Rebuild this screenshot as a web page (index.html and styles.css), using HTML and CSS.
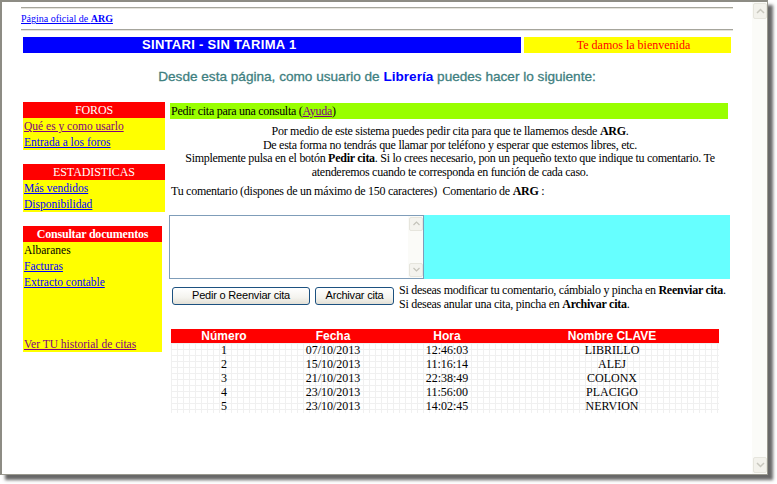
FILE: index.html
```html
<!DOCTYPE html>
<html lang="es">
<head>
<meta charset="utf-8">
<title>SINTARI - SIN TARIMA 1</title>
<link rel="stylesheet" href="styles.css">
</head>
<body>
<div class="window">
  <div class="page">
    <hr class="rule rule-first">
    <div class="toplink"><a href="#">Página oficial de <b>ARG</b></a></div>
    <hr class="rule">
    <div class="banner">
      <div class="banner-title">SINTARI - SIN TARIMA 1</div>
      <div class="banner-welcome">Te damos la bienvenida</div>
    </div>
    <h1 class="lead">Desde esta página, como usuario de <span class="lead-user">Librería</span> puedes hacer lo siguiente:</h1>
    <div class="columns">
      <aside class="sidebar">
        <div class="box">
          <div class="box-head">FOROS</div>
          <div class="box-item"><a href="#" class="visited">Qué es y como usarlo</a></div>
          <div class="box-item"><a href="#">Entrada a los foros</a></div>
        </div>
        <div class="box">
          <div class="box-head">ESTADISTICAS</div>
          <div class="box-item"><a href="#">Más vendidos</a></div>
          <div class="box-item"><a href="#">Disponibilidad</a></div>
        </div>
        <div class="box box-docs">
          <div class="box-head box-head-bold">Consultar documentos</div>
          <div class="box-item">Albaranes</div>
          <div class="box-item"><a href="#">Facturas</a></div>
          <div class="box-item"><a href="#">Extracto contable</a></div>
          <div class="box-spacer"></div>
          <div class="box-item"><a href="#" class="visited">Ver TU historial de citas</a></div>
        </div>
      </aside>
      <main class="main">
        <div class="greenbar">Pedir cita para una consulta (<a href="#" class="visited">Ayuda</a>)</div>
        <p class="intro">Por medio de este sistema puedes pedir cita para que te llamemos desde <b>ARG</b>.<br>De esta forma no tendrás que llamar por teléfono y esperar que estemos libres, etc.<br>Simplemente pulsa en el botón <b>Pedir cita</b>. Si lo crees necesario, pon un pequeño texto que indique tu comentario. Te<br>atenderemos cuando te corresponda en función de cada caso.</p>
        <p class="comment-label">Tu comentario (dispones de un máximo de 150 caracteres)&nbsp; Comentario de <b>ARG</b> :</p>
        <div class="comment-row">
          <div class="textbox">
            <textarea class="textbox-input"></textarea>
            <div class="textbox-scroll">
              <div class="tsb-btn"><svg width="7" height="5" viewBox="0 0 7 5"><path d="M0.5 4 L3.5 1 L6.5 4" fill="none" stroke="#c4c3ba" stroke-width="1.2"/></svg></div>
              <div class="tsb-track"></div>
              <div class="tsb-btn"><svg width="7" height="5" viewBox="0 0 7 5"><path d="M0.5 1 L3.5 4 L6.5 1" fill="none" stroke="#c4c3ba" stroke-width="1.2"/></svg></div>
            </div>
          </div>
          <div class="arg-comment"></div>
        </div>
        <div class="actions">
          <button class="xp-btn btn-send">Pedir o Reenviar cita</button>
          <button class="xp-btn btn-archive">Archivar cita</button>
          <p class="actions-help">Si deseas modificar tu comentario, cámbialo y pincha en <b>Reenviar cita</b>.<br>Si deseas anular una cita, pincha en <b>Archivar cita</b>.</p>
        </div>
        <table class="citas">
          <thead>
            <tr><th class="c1">Número</th><th class="c2">Fecha</th><th class="c3">Hora</th><th class="c4">Nombre CLAVE</th></tr>
          </thead>
          <tbody>
            <tr><td>1</td><td>07/10/2013</td><td>12:46:03</td><td>LIBRILLO</td></tr>
            <tr><td>2</td><td>15/10/2013</td><td>11:16:14</td><td>ALEJ</td></tr>
            <tr><td>3</td><td>21/10/2013</td><td>22:38:49</td><td>COLONX</td></tr>
            <tr><td>4</td><td>23/10/2013</td><td>11:56:00</td><td>PLACIGO</td></tr>
            <tr><td>5</td><td>23/10/2013</td><td>14:02:45</td><td>NERVION</td></tr>
          </tbody>
        </table>
      </main>
    </div>
  </div>
  <div class="scrollbar">
    <div class="sb-btn"><svg width="9" height="6" viewBox="0 0 9 6"><path d="M1 5 L4.5 1.5 L8 5" fill="none" stroke="#c8c7be" stroke-width="1.5"/></svg></div>
    <div class="sb-track"></div>
    <div class="sb-btn"><svg width="9" height="6" viewBox="0 0 9 6"><path d="M1 1 L4.5 4.5 L8 1" fill="none" stroke="#c8c7be" stroke-width="1.5"/></svg></div>
  </div>
</div>
</body>
</html>
```

FILE: styles.css
```css
html, body {
  margin: 0;
  padding: 0;
}
body {
  width: 777px;
  height: 484px;
  overflow: hidden;
  background: #ffffff;
  font-family: "Liberation Serif", "Times New Roman", serif;
  font-size: 12px;
  color: #000;
}
a { color: #0000ff; }
a.visited { color: #800080; }

.window {
  width: 765px;
  height: 472px;
  border-top: 2px solid #8d8c84;
  border-left: 2px solid #8d8c84;
  border-right: 1px solid #9a998f;
  border-bottom: 1px solid #9a998f;
  box-shadow: 5px 5px 3px rgba(40, 40, 40, 0.7);
  background: #fff;
  display: flex;
  overflow: hidden;
}
.page {
  width: 712px;
  padding: 0 19px;
  flex: none;
}

/* scrollbar of the window */
.scrollbar {
  flex: 1;
  background: #fbfbf8;
  display: flex;
  flex-direction: column;
  padding: 1px 0 1px 1px;
}
.sb-btn {
  height: 14px;
  border: 1px solid #e6e5dd;
  border-radius: 2px;
  background: #f3f2ec;
  display: flex;
  align-items: center;
  justify-content: center;
}
.sb-track { flex: 1; }

.rule {
  margin: 0;
  height: 0;
  border: none;
  border-top: 1px solid #a6a59c;
  border-bottom: 1px solid #e4e3dc;
}
.rule-first { margin-top: 5px; }
.toplink {
  height: 20px;
  line-height: 20px;
  font-size: 10px;
}

.banner {
  margin-top: 6px;
  display: flex;
  gap: 3px;
  padding: 0 2px;
  height: 16px;
}
.banner-title {
  width: 379px;
  padding-left: 119px;
  background: #0000ff;
  color: #fff;
  font-family: "Liberation Sans", Arial, sans-serif;
  font-weight: bold;
  font-size: 13px;
  letter-spacing: 0.3px;
  line-height: 16px;
}
.banner-welcome {
  flex: 1;
  background: #ffff00;
  color: #ff0000;
  text-align: center;
  line-height: 16px;
  font-size: 12px;
  padding-left: 12px;
}

.lead {
  margin: 16px 0 17px;
  text-align: center;
  font-family: "Liberation Sans", Arial, sans-serif;
  font-size: 13.6px;
  line-height: 16px;
  font-weight: normal;
  color: #408080;
  -webkit-text-stroke: 0.3px #408080;
}
.lead-user {
  color: #0000ff;
  font-weight: bold;
  -webkit-text-stroke: 0;
}

.columns {
  display: flex;
  gap: 4px;
  padding-left: 2px;
  align-items: flex-start;
}

.sidebar {
  width: 142px;
  display: flex;
  flex-direction: column;
  gap: 14px;
}
.box {
  background: #ffff00;
  font-size: 11.5px;
}
.box-docs { width: 139px; }
.box-head {
  background: #ff0000;
  color: #fff;
  text-align: center;
  height: 16px;
  line-height: 16px;
  font-size: 12px;
  letter-spacing: -0.1px;
}
.box-head-bold { font-weight: bold; letter-spacing: -0.2px; }
.box-item {
  height: 16px;
  line-height: 16px;
  padding-left: 1px;
  white-space: nowrap;
}
.box-spacer { height: 46px; }

.main {
  width: 562px;
  padding-top: 1px;
  letter-spacing: -0.27px;
}
.greenbar {
  margin-left: 1px;
  width: 558px;
  height: 16px;
  line-height: 16px;
  background: #99ff00;
  padding-left: 1px;
  box-sizing: border-box;
}
.intro {
  margin: 6px 0 0;
  text-align: center;
  line-height: 13.7px;
  white-space: nowrap;
}
.comment-label {
  margin: 4px 0 0 2px;
  line-height: 14px;
  white-space: nowrap;
}
.comment-row {
  display: flex;
  margin-top: 17px;
  height: 64px;
}
.textbox {
  width: 253px;
  height: 62px;
  border: 1px solid #7f9db9;
  display: flex;
  background: #fff;
  flex: none;
}
.textbox-input {
  flex: 1;
  border: none;
  margin: 0;
  padding: 0;
  resize: none;
  outline: none;
  background: #fff;
}
.textbox-scroll {
  width: 14px;
  display: flex;
  flex-direction: column;
  background: #fbfbf8;
  padding: 1px 0 1px 1px;
}
.tsb-btn {
  height: 12px;
  border: 1px solid #e6e5dd;
  border-radius: 2px;
  background: #f4f3ee;
  display: flex;
  align-items: center;
  justify-content: center;
}
.tsb-track { flex: 1; }
.arg-comment {
  width: 306px;
  flex: none;
  background: #66ffff;
}

.actions {
  display: flex;
  align-items: flex-start;
  margin-top: 4px;
  padding-left: 3px;
}
.xp-btn {
  flex: none;
  margin: 4px 0 0;
  height: 18px;
  padding: 0;
  border: 1px solid #1c5180;
  border-radius: 3px;
  background: linear-gradient(#ffffff, #f4f3ee 60%, #e3e0d6);
  font-family: "Liberation Sans", Tahoma, sans-serif;
  font-size: 11px;
  letter-spacing: -0.2px;
  color: #000;
  line-height: 15px;
}
.btn-send { width: 138px; }
.btn-archive { width: 79px; margin-left: 5px; }
.actions-help {
  flex: none;
  margin: 0 0 0 5px;
  line-height: 14px;
  white-space: nowrap;
}

.citas {
  margin: 18px 0 0 2px;
  width: 548px;
  border-collapse: collapse;
  table-layout: fixed;
  letter-spacing: 0;
}
.citas th {
  background: #ff0000;
  color: #fff;
  font-family: "Liberation Sans", Arial, sans-serif;
  font-weight: bold;
  font-size: 12px;
  height: 14px;
  line-height: 14px;
  padding: 0;
}
.citas .c1 { width: 106px; }
.citas .c2 { width: 112px; }
.citas .c3 { width: 116px; }
.citas tbody {
  background-color: #fff;
  background-image:
    linear-gradient(to right, #f0f0f0 1px, transparent 1px),
    linear-gradient(to bottom, #f0f0f0 1px, transparent 1px);
  background-size: 6px 6px;
}
.citas td {
  text-align: center;
  height: 14px;
  line-height: 14px;
  padding: 0;
}
```
